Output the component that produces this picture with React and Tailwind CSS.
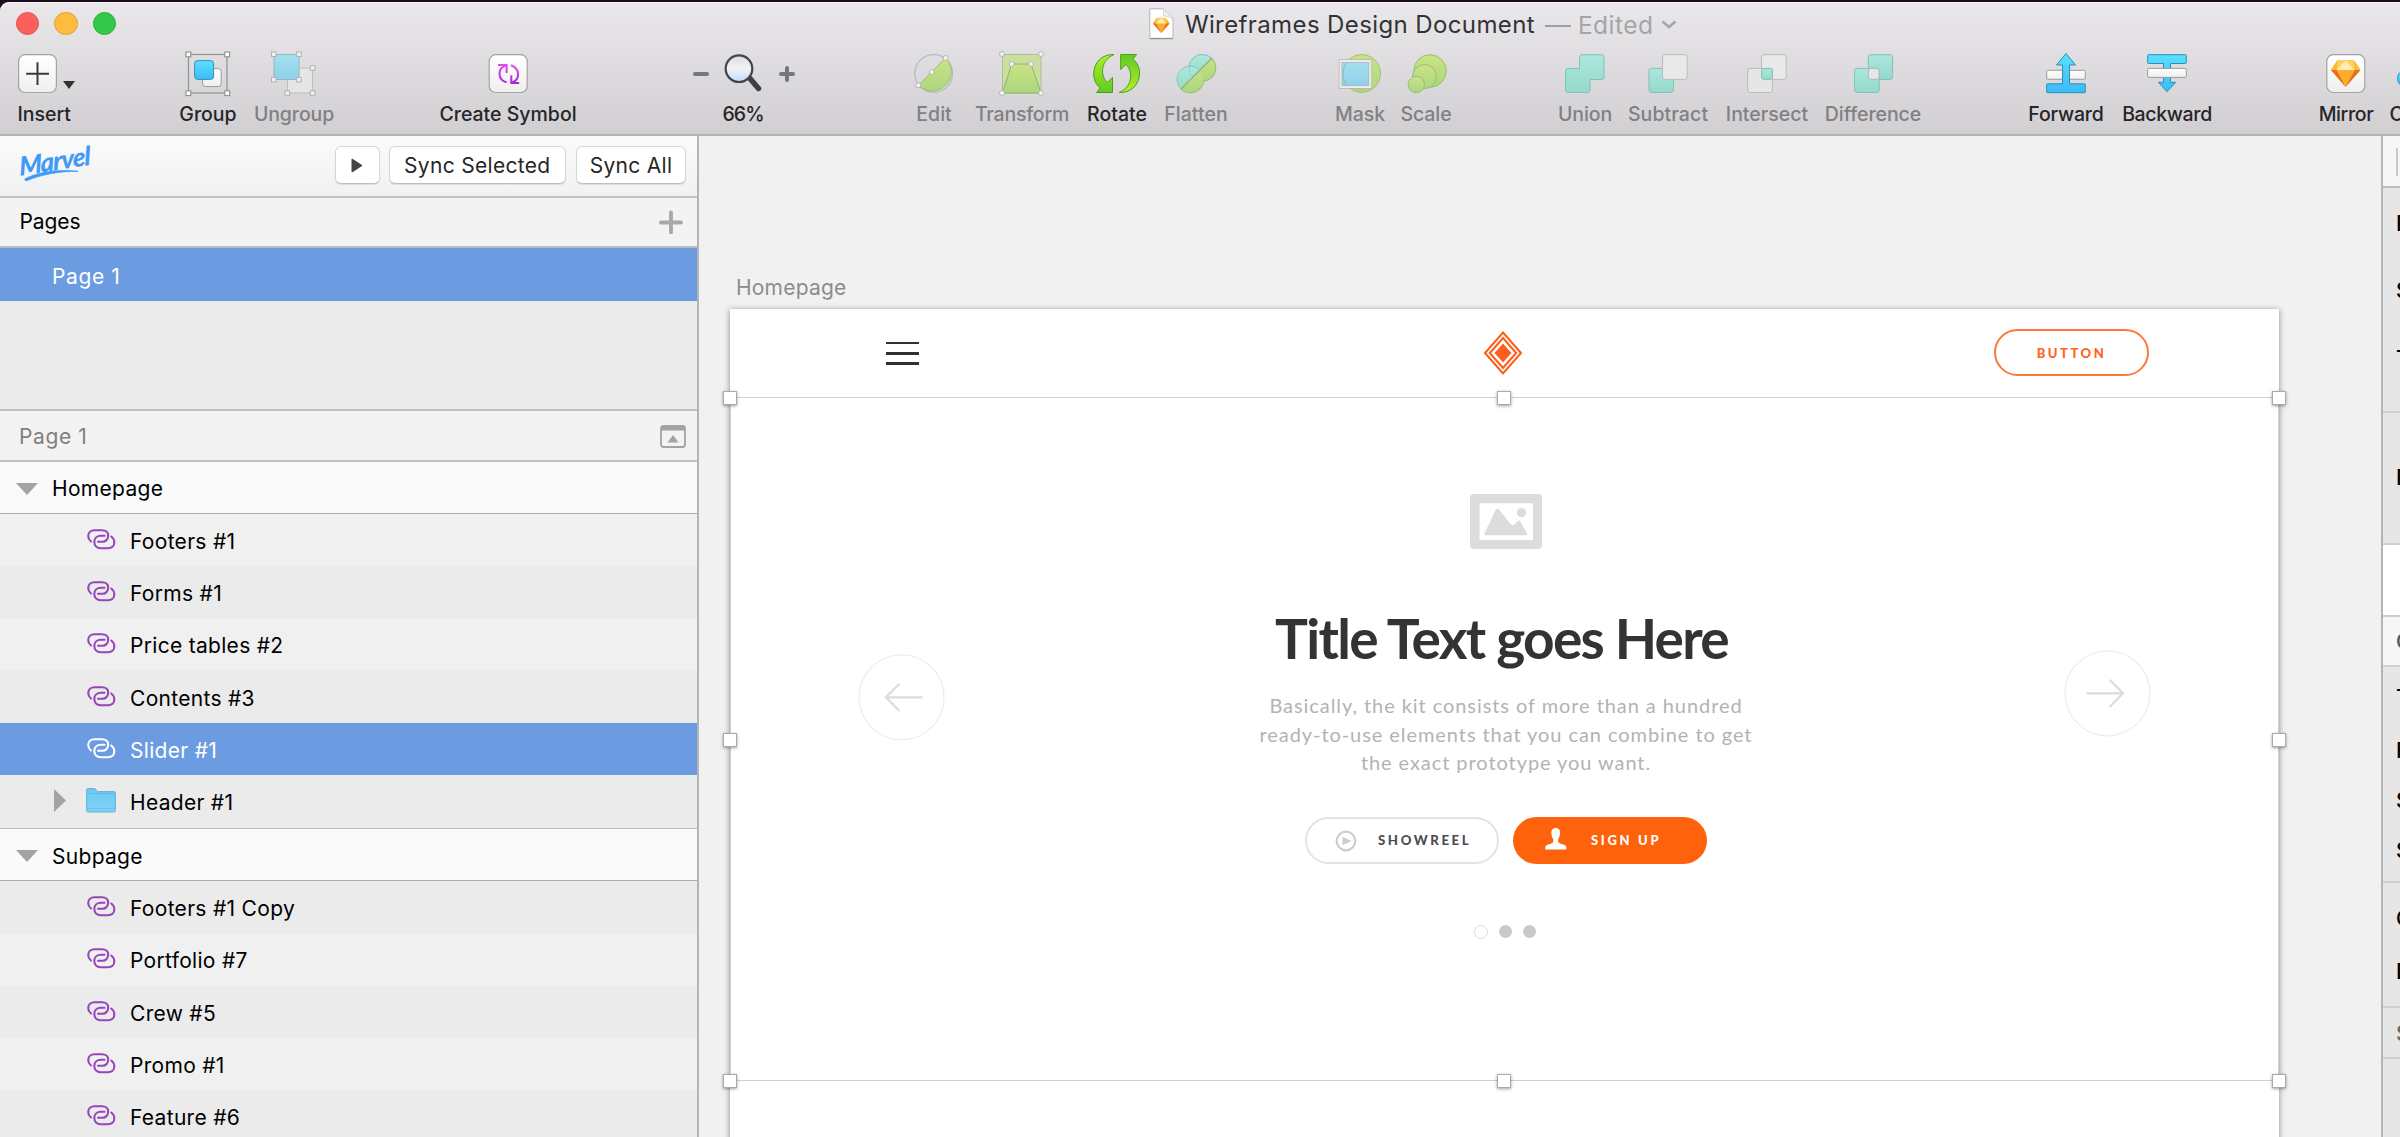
import React from "react";

function Icon({ children, className = "" }) {
  return (
    <svg width="48" height="48" viewBox="0 0 48 48" fill="none" className={"shrink-0 " + className}>
      {children}
    </svg>
  );
}

function Gradients() {
  return (
    <svg width="0" height="0" className="absolute" aria-hidden="true">
      <defs>
        <linearGradient id="blue" x1="0" y1="0" x2="0" y2="1"><stop offset="0" stopColor="#5be0fe" /><stop offset="1" stopColor="#3cbaf8" /></linearGradient>
        <linearGradient id="green" x1="0" y1="0" x2="0" y2="1"><stop offset="0" stopColor="#b0ee2c" /><stop offset="1" stopColor="#62cb22" /></linearGradient>
        <linearGradient id="paleGreen" x1="0" y1="0" x2="0" y2="1"><stop offset="0" stopColor="#cbe385" /><stop offset="1" stopColor="#aad77f" /></linearGradient>
        <linearGradient id="teal" x1="0" y1="0" x2="0" y2="1"><stop offset="0" stopColor="#abe8dd" /><stop offset="1" stopColor="#95d9cb" /></linearGradient>
        <linearGradient id="white" x1="0" y1="0" x2="0" y2="1"><stop offset="0" stopColor="#ffffff" /><stop offset="1" stopColor="#efefef" /></linearGradient>
        <linearGradient id="lens" x1="0" y1="0" x2="0" y2="1"><stop offset="0" stopColor="#dedde0" /><stop offset="0.5" stopColor="#f2f3f5" /><stop offset="1" stopColor="#bfdcfb" /></linearGradient>
        <linearGradient id="purple" gradientUnits="userSpaceOnUse" x1="0" y1="14" x2="0" y2="34"><stop offset="0" stopColor="#e24df0" /><stop offset="1" stopColor="#a822d8" /></linearGradient>
        <linearGradient id="paleBlue" x1="0" y1="0" x2="0" y2="1"><stop offset="0" stopColor="#a5e0ee" /><stop offset="1" stopColor="#8fd0ea" /></linearGradient>
        <linearGradient id="folder" x1="0" y1="0" x2="0" y2="1"><stop offset="0" stopColor="#6dc9f5" /><stop offset="1" stopColor="#7fd2f8" /></linearGradient>
      </defs>
    </svg>
  );
}

const Sq = ({ x, y, stroke = "#8d8d8d" }) => <rect x={x - 2.4} y={y - 2.4} width="4.8" height="4.8" fill="#fff" stroke={stroke} strokeWidth="1.1" />;
const Dot = ({ x, y }) => <circle cx={x} cy={y} r="2.5" fill="#f4f4f4" stroke="#b5b5b5" strokeWidth="1" />;

const GroupIcon = () => (
  <Icon>
    <rect x="4.5" y="4.5" width="38.5" height="38.5" stroke="#909092" strokeWidth="1.2" />
    <Sq x={4.4} y={4.4} /><Sq x={43.2} y={4.4} /><Sq x={4.4} y={43.2} /><Sq x={43.2} y={43.2} />
    <rect x="18.6" y="18.6" width="18.6" height="18" rx="3" fill="url(#white)" stroke="#9a9a9a" />
    <rect x="10.6" y="10.6" width="19" height="18.8" rx="3" fill="url(#blue)" stroke="#2f93bd" />
  </Icon>
);

const UngroupIcon = () => (
  <Icon>
    <rect x="17.5" y="18" width="25" height="25" fill="#e6e6e7" stroke="#bdbdbf" />
    <rect x="4" y="4.5" width="25" height="25" fill="url(#paleBlue)" stroke="#8fb9c6" />
    {[[3.8, 4.2], [29, 4.2], [3.8, 29.6], [29, 29.6], [42.6, 18], [17.3, 43], [42.6, 43]].map(([x, y]) => (
      <rect key={x + "-" + y} x={x - 2.3} y={y - 2.3} width="4.6" height="4.6" fill="#efefef" stroke="#b2b2b4" />
    ))}
  </Icon>
);

const SymbolIcon = () => (
  <Icon>
    <rect x="5.2" y="4.7" width="38" height="37.8" rx="6.5" fill="url(#white)" stroke="#a3a3a5" strokeWidth="1.2" />
    <g stroke="url(#purple)" strokeWidth="2">
      <path d="M14 15H22.6V23" />
      <path d="M22 15.4C13.5 18 13 29.5 22.6 32.4" />
      <path d="M35.2 32.9H27.3V25.3" />
      <path d="M27 15.2C36 18.500 36.500 29.500 28 32.4" />
    </g>
  </Icon>
);

const ZoomIcon = () => (
  <div className="flex w-[102px] shrink-0 translate-x-px items-center justify-between">
    <div className="h-[4px] w-[16px] rounded-full bg-[#77767a]" />
    <Icon>
      <path d="M30 28.500L38.500 38.500" stroke="#3f3f41" strokeWidth="5.500" strokeLinecap="round" />
      <circle cx="19" cy="18.700" r="13.300" fill="url(#lens)" stroke="#454547" strokeWidth="2.200" />
    </Icon>
    <svg width="16" height="16" viewBox="0 0 16 16"><path d="M2 8H14M8 2V14" stroke="#77767a" strokeWidth="4" strokeLinecap="round" /></svg>
  </div>
);

const EditIcon = () => (
  <Icon>
    <circle cx="23.700" cy="23.500" r="18.900" stroke="#b9b8ba" strokeWidth="1.200" />
    <path d="M8.300 35.300L35.700 8A18.900 18.900 0 0 1 8.300 35.300Z" fill="url(#paleGreen)" stroke="#9bbd78" />
    <Dot x={8.3} y={35.3} /><Dot x={21.7} y={22} /><Dot x={35.7} y={8} />
  </Icon>
);

const TransformIcon = () => (
  <Icon>
    <rect x="4.500" y="4.500" width="38.500" height="38.500" fill="#c9dfa0" stroke="#aebf90" />
    <path d="M4.500 43L13.700 14H33L43 43Z" fill="url(#paleGreen)" stroke="#94ae78" />
    <Dot x={4} y={4} /><Dot x={43} y={4} /><Dot x={4} y={43} /><Dot x={43} y={43} /><Dot x={13.7} y={14} /><Dot x={33} y={14} />
  </Icon>
);

const ROTATE = "M21 4.500C8.500 4 .700 13 .700 24C.700 30 3 34.500 7.300 38L3.500 42.500H19.500V27.300L14.800 32.200C8.500 29.500 5 11.500 21 4.500Z";
const RotateIcon = () => (
  <Icon>
    <path d={ROTATE} fill="url(#green)" stroke="#4f9e1c" />
    <g transform="rotate(180 23.600 23.500)">
      <path d={ROTATE} fill="url(#green)" stroke="#4f9e1c" />
    </g>
  </Icon>
);

const FlattenIcon = () => (
  <Icon>
    <clipPath id="cutUpper"><path d="M0 48L48 0H0Z" /></clipPath>
    <clipPath id="cutLower"><path d="M0 48L48 0V48Z" /></clipPath>
    <g clipPath="url(#cutUpper)" fill="url(#teal)" stroke="#8cc5ba">
      <circle cx="30.300" cy="17.800" r="13.400" /><circle cx="18.300" cy="29.400" r="13.400" />
      <circle cx="30.300" cy="17.800" r="13.400" fill="none" strokeOpacity="0.5" />
    </g>
    <g clipPath="url(#cutLower)">
      <g stroke="#9bbd78" strokeWidth="2"><circle cx="30.300" cy="17.800" r="13" /><circle cx="18.300" cy="29.400" r="13" /></g>
      <g fill="url(#paleGreen)"><circle cx="30.300" cy="17.800" r="12.900" /><circle cx="18.300" cy="29.400" r="12.900" /></g>
    </g>
    <path d="M9.200 38.800L39.800 8.200" stroke="#93a873" strokeWidth="1.200" />
  </Icon>
);

const MaskIcon = () => (
  <Icon>
    <circle cx="25.700" cy="23.500" r="18.900" fill="url(#paleGreen)" stroke="#a5bf80" />
    <rect x="4.500" y="11" width="29.800" height="26" fill="url(#paleBlue)" stroke="#b5b5b7" strokeWidth="3.600" />
    <rect x="4.500" y="11" width="29.800" height="26" stroke="#ececec" strokeWidth="2" />
    <path d="M10.500 12.500A18.900 18.900 0 0 0 10.500 35" stroke="#85b8c4" />
  </Icon>
);

const ScaleIcon = () => (
  <Icon className="translate-x-px">
    <g fill="url(#paleGreen)" stroke="#9dba78">
      <circle cx="27" cy="21" r="16.300" /><circle cx="21.500" cy="26.600" r="12" /><circle cx="13.300" cy="34.500" r="8.200" />
    </g>
  </Icon>
);

const boolStroke = "#86bfb3";
const UnionIcon = () => (
  <Icon><path d="M21 4.700H40.500a2.500 2.500 0 0 1 2.500 2.500V27a2.500 2.500 0 0 1-2.500 2.500H29V40a2.500 2.500 0 0 1-2.500 2.500H7a2.500 2.500 0 0 1-2.500-2.500V20.900a2.500 2.500 0 0 1 2.500-2.500H18.500V7.200a2.500 2.500 0 0 1 2.500-2.500Z" fill="url(#teal)" stroke={boolStroke} /></Icon>
);
const SubtractIcon = () => (
  <Icon>
    <rect x="5" y="18.400" width="24.500" height="24.100" rx="2.500" fill="url(#teal)" stroke={boolStroke} />
    <rect x="18.500" y="4.700" width="24.700" height="24.700" rx="2.500" fill="#e9e9ea" stroke="#bbbbbd" />
  </Icon>
);
const IntersectIcon = () => (
  <Icon>
    <rect x="18.500" y="4.700" width="24.700" height="24.700" rx="2.500" fill="#e9e9ea" stroke="#bbbbbd" />
    <rect x="4.700" y="18.400" width="24.700" height="24.100" rx="2.500" fill="#e6e6e7" stroke="#bbbbbd" />
    <rect x="18.500" y="18.400" width="10.900" height="11" rx="2.500" fill="url(#teal)" stroke={boolStroke} />
  </Icon>
);
const DifferenceIcon = () => (
  <Icon>
    <rect x="19.300" y="4.700" width="24.300" height="24.700" rx="2.500" fill="url(#teal)" stroke={boolStroke} />
    <rect x="5.500" y="18.400" width="24.700" height="24.100" rx="2.500" fill="url(#teal)" stroke={boolStroke} />
    <rect x="19.300" y="18.400" width="10.900" height="11" rx="2.500" fill="#e6e6e7" stroke="#a9b9b6" />
  </Icon>
);

const ForwardIcon = () => (
  <Icon>
    <rect x="4.700" y="20.300" width="38.600" height="9" rx="1" fill="url(#white)" stroke="#9b9b9d" />
    <path d="M24 3.500L33.500 15H27.500V33.800H42.500a.8 .8 0 0 1 .8 .8V41.900a.8 .8 0 0 1-.8 .8H5.500a.8 .8 0 0 1-.8-.8V34.600a.8 .8 0 0 1 .8-.8H20.500V15H14.500Z" fill="url(#blue)" stroke="#2c8fb8" />
  </Icon>
);
const BackwardIcon = () => (
  <Icon>
    <path d="M5.500 4.700H42.500a.8 .8 0 0 1 .8 .8V12.700a.8 .8 0 0 1-.8 .8H27.500V32.300H32.700L24 41.700L15.300 32.300H20.500V13.500H5.500a.8 .8 0 0 1-.8-.8V5.500a.8 .8 0 0 1 .8-.8Z" fill="url(#blue)" stroke="#2c8fb8" />
    <rect x="4.700" y="18.400" width="38.600" height="9" rx="1" fill="url(#white)" stroke="#9b9b9d" />
  </Icon>
);

function Gem() {
  return (
    <>
      <path d="M15.300 10.500L23.600 10L32 10.500L38.400 20L23.600 37L9 20Z" fill="#fdad2d" />
      <path d="M15.300 10.500L14.500 20H9Z" fill="#fdb82e" />
      <path d="M32 10.500L32.800 20H38.400Z" fill="#fdb82e" />
      <path d="M15.300 10.500L23.600 10L14.500 20Z M32 10.500L23.600 10L32.800 20Z" fill="#fed154" />
      <path d="M23.600 10L32.800 20H14.500Z" fill="#feebb5" />
      <path d="M9 20H14.500L23.600 37Z M38.400 20H32.800L23.600 37Z" fill="#ea6c21" />
    </>
  );
}
const MirrorIcon = () => (
  <Icon><rect x="4.800" y="4.700" width="38" height="37.800" rx="6.500" fill="url(#white)" stroke="#a3a3a5" strokeWidth="1.200" /><Gem /></Icon>
);
const CloudIcon = () => (
  <Icon className="translate-x-px"><circle cx="12" cy="28.500" r="8.500" fill="url(#blue)" stroke="#2c8fb8" /></Icon>
);

const TOOLS = [
  { label: "Group", icon: GroupIcon, box: "ml-[104px] w-[56px]", on: true },
  { label: "Ungroup", icon: UngroupIcon, box: "ml-[18px] w-[80px] tracking-[-0.12px]" },
  { label: "Create Symbol", icon: SymbolIcon, box: "ml-[106px] w-[136px]", on: true },
  { label: "66%", icon: ZoomIcon, box: "ml-[116px] w-[102px] tracking-[-0.9px]", on: true },
  { label: "Edit", icon: EditIcon, box: "ml-[122px] w-[36px]" },
  { label: "Transform", icon: TransformIcon, box: "ml-[23px] w-[94px] tracking-[-0.22px]" },
  { label: "Rotate", icon: RotateIcon, box: "ml-[18px] w-[60px]", on: true },
  { label: "Flatten", icon: FlattenIcon, box: "ml-[18px] w-[62px] tracking-[0.08px]" },
  { label: "Mask", icon: MaskIcon, box: "ml-[109px] w-[48px] tracking-[-0.1px]" },
  { label: "Scale", icon: ScaleIcon, box: "ml-[17px] w-[50px] tracking-[-0.1px]" },
  { label: "Union", icon: UnionIcon, box: "ml-[107px] w-[54px] tracking-[-0.1px]" },
  { label: "Subtract", icon: SubtractIcon, box: "ml-[16px] w-[80px] tracking-[0.1px]" },
  { label: "Intersect", icon: IntersectIcon, box: "ml-[18px] w-[82px]" },
  { label: "Difference", icon: DifferenceIcon, box: "ml-[17px] w-[96px] tracking-[-0.06px]" },
  { label: "Forward", icon: ForwardIcon, box: "ml-[108px] w-[74px] tracking-[-0.2px]", on: true },
  { label: "Backward", icon: BackwardIcon, box: "ml-[20px] w-[88px] tracking-[-0.35px]", on: true },
  { label: "Mirror", icon: MirrorIcon, box: "ml-[107px] w-[56px] tracking-[-0.39px]", on: true },
  { label: "Cloud", icon: CloudIcon, box: "ml-[16px] w-[54px]", on: true },
];

function Tool({ label, icon: Glyph, box, on }) {
  return (
    <div className={"flex shrink-0 flex-col items-center " + box}>
      <Glyph />
      <span className={"mt-[3.500px] whitespace-nowrap leading-6 " + (on ? "text-[#262527]" : "text-[#818083]")}>{label}</span>
    </div>
  );
}

function Toolbar() {
  return (
    <header className="flex h-[134px] shrink-0 flex-col rounded-tl-[9px] border-b-2 border-[#b2b1b3] bg-linear-to-b from-[#eae8eb] to-[#d1cfd2] shadow-[inset_0_1px_0_#f6f5f6]">
      <div className="flex h-[48px] items-start">
        <div className="mt-[9.500px] ml-[15.500px] flex gap-[15.200px]">
          <div className="size-[23.500px] rounded-full border border-[#e2514d] bg-[#fc605c]" />
          <div className="size-[23.500px] rounded-full border border-[#e0a135] bg-[#fdbc40]" />
          <div className="size-[23.500px] rounded-full border border-[#2bab3c] bg-[#34c84a]" />
        </div>
        <svg width="25" height="32" viewBox="0 0 25 32" className="mt-[5.500px] ml-[1033px]">
          <path d="M.8 .8H14.500L24 10.500V30.300H.8Z" fill="#fff" stroke="#b5b5b7" />
          <path d="M14.500 .8V7.500L24 10.500Z" fill="#f1f1f1" stroke="#d0d0d0" strokeWidth="0.800" />
          <path d="M.8 30.600H24" stroke="#909092" strokeWidth="1.200" />
          <g transform="translate(-1 4.200) scale(0.560)"><Gem /></g>
        </svg>
        <span className="mt-[6.500px] ml-[10.500px] w-[356px] whitespace-nowrap text-[24px] leading-8 tracking-[0.390px] text-[#333235]">Wireframes Design Document</span>
        <div className="mt-[22.500px] ml-[4px] h-[2px] w-[26px] bg-[#9d9c9f]" />
        <span className="mt-[6.500px] ml-[7px] w-[76px] whitespace-nowrap text-[24.500px] leading-8 tracking-[0.500px] text-[#a5a4a7]">Edited</span>
        <svg width="16" height="10" viewBox="0 0 16 10" fill="none" className="mt-[17.500px] ml-[7.500px]"><path d="M1.500 1.500L8 7L14.500 1.500" stroke="#a5a4a7" strokeWidth="2.600" /></svg>
      </div>
      <div className="flex text-[19.500px] font-medium">
        <div className="ml-[17.500px] flex w-[58.500px] shrink-0 flex-col">
          <div className="flex h-12 items-start">
            <svg width="40" height="48" viewBox="0 0 40 48" className="shrink-0">
              <rect x="0.600" y="4.700" width="37.800" height="37.800" rx="6.500" fill="url(#white)" stroke="#a3a3a5" strokeWidth="1.200" />
              <path d="M8.200 23.700H31M19.500 12.300V35" stroke="#3a3a3c" strokeWidth="2" />
            </svg>
            <svg width="12" height="8" viewBox="0 0 12 8" className="mt-[31px] ml-[5px] shrink-0"><path d="M0 0H12L6 8Z" fill="#333" /></svg>
          </div>
          <span className="mt-[3.500px] leading-6 text-[#262527]">Insert</span>
        </div>
        {TOOLS.map((t) => <Tool key={t.label} {...t} />)}
      </div>
    </header>
  );
}

function LinkIcon({ color }) {
  return (
    <svg width="29" height="21" viewBox="0 0 29 21" fill="none" className="shrink-0">
      <g stroke={color} strokeWidth="2.100" strokeLinecap="round">
        <path d="M4 12.500C2.200 11 1.200 9.200 1.200 7C1.200 3.500 4 1.200 7.500 1.200H15C18.500 1.200 21.200 3.300 21.200 6.500C21.200 10 18.800 12.800 15.500 12.800H11" />
        <path d="M17.500 6.800H14C10 6.800 7.300 9.300 7.300 12.800C7.300 16.800 10 19.200 13.500 19.200H21C24.800 19.200 27.300 17 27.300 13.500C27.300 11 26.300 9 24.300 7.500" />
      </g>
    </svg>
  );
}

const FolderIcon = () => (
  <svg width="30" height="25" viewBox="0 0 30 25" className="shrink-0">
    <path d="M.6 2A1.500 1.500 0 0 1 2 .600H9L11.500 3.600H28A1.500 1.500 0 0 1 29.400 5V22.500A1.500 1.500 0 0 1 28 24H2A1.500 1.500 0 0 1 .6 22.500Z" fill="url(#folder)" stroke="#58aedb" strokeWidth="0.900" />
    <path d="M1 5.500H29" stroke="#5cb9e8" strokeWidth="0.900" />
    <path d="M1 20.500H29" stroke="#63bde9" strokeWidth="0.700" />
  </svg>
);

function Layer({ name, tone, selected, folder }) {
  return (
    <div className={"flex h-[52.300px] shrink-0 items-center pt-[3px] " + (selected ? "bg-[#6b9ce1] text-white" : tone === "light" ? "bg-[#f0f0f0]" : "bg-[#ebebeb]")}>
      <div className="-mt-[5px] flex w-[131px] shrink-0 items-center">
        {folder ? (
          <>
            <svg width="12" height="23" viewBox="0 0 12 23" className="ml-[54px] shrink-0"><path d="M0 0L12 11.500L0 23Z" fill="#a3a3a3" /></svg>
            <div className="ml-5"><FolderIcon /></div>
          </>
        ) : (
          <div className="ml-[86.500px]"><LinkIcon color={selected ? "#ffffff" : "#9745bb"} /></div>
        )}
      </div>
      <span className="-ml-px">{name}</span>
    </div>
  );
}

function Artboard({ name }) {
  return (
    <div className="flex h-[52px] shrink-0 items-center border-b border-[#adadad] bg-[#fafafa] pt-[3px]">
      <svg width="22" height="12" viewBox="0 0 22 12" className="ml-[16px]"><path d="M0 0H22L11 12Z" fill="#a3a3a3" /></svg>
      <span className="ml-[14px]">{name}</span>
    </div>
  );
}

const SyncButton = ({ className, children }) => (
  <button className={"flex h-[38.500px] items-center justify-center whitespace-nowrap rounded-[6px] border border-[#d6d6d6] border-b-[#bebebe] bg-white pt-px text-[#262626] shadow-[0_1px_1px_#00000018] " + className}>{children}</button>
);

function Sidebar() {
  return (
    <aside className="flex w-[699px] shrink-0 flex-col overflow-hidden border-r-2 border-[#b5b5b5] bg-[#ebebeb] text-[21px] tracking-[0.300px] text-black">
      <div className="flex h-[62px] shrink-0 items-start border-b-2 border-[#c3c3c3] bg-linear-to-b from-[#fbfbfb] to-[#f1f1f1] pt-[9.500px]">
        <div className="relative ml-[18px] h-[40px] w-[80px] shrink-0 text-[#3f9af8]">
          <div className="origin-bottom-left translate-x-[2px] translate-y-[4px] -rotate-[9deg] -skew-x-6 font-['Lato'] text-[26px] leading-8 font-black italic tracking-[-1px]">Marvel</div>
          <svg width="60" height="14" viewBox="0 0 60 14" className="absolute top-[22px] left-[6px]"><path d="M1.500 10.500C15 4 34 1 54 3.300C36 3 18 6.500 3 12.500C1 13.200 0 11.500 1.500 10.500Z" fill="currentColor" stroke="currentColor" strokeWidth="0.800" /></svg>
        </div>
        <SyncButton className="ml-[237px] w-[44.500px]">
          <svg width="12" height="15" viewBox="0 0 12 15"><path d="M1 1L11 7.500L1 14Z" fill="#444" stroke="#444" strokeWidth="1" strokeLinejoin="round" /></svg>
        </SyncButton>
        <SyncButton className="ml-[9.500px] w-[176.500px]">Sync Selected</SyncButton>
        <SyncButton className="ml-[10.500px] w-[110px]">Sync All</SyncButton>
      </div>
      <div className="flex h-[50px] shrink-0 items-center justify-between border-b-2 border-[#bdbdbd] bg-[#f3f3f3] pr-[14px] pl-[19.500px] tracking-[-0.100px]">
        <span>Pages</span>
        <svg width="24" height="24" viewBox="0 0 24 24" className="-mt-px"><path d="M2 12.500H22M12 2.500V22.500" stroke="#a8a8a8" strokeWidth="3.800" strokeLinecap="round" /></svg>
      </div>
      <div className="flex h-[53px] shrink-0 items-center bg-[#6b9ce1] pt-[4px] pl-[52px] tracking-[0.600px] text-white">Page 1</div>
      <div className="h-[108px] shrink-0" />
      <div className="flex h-[53px] shrink-0 items-center justify-between border-y-2 border-[#bfbfbf] bg-[#f3f3f3] pt-[2px] pr-[11px] pl-[19px] tracking-[0.600px] text-[#808080]">
        <span>Page 1</span>
        <svg width="26" height="23" viewBox="0 0 26 23" fill="none">
          <rect x="1" y="1" width="24" height="21" rx="2.500" stroke="#a3a3a3" strokeWidth="1.800" />
          <path d="M1 1H25V5.500H1Z" fill="#a3a3a3" /><path d="M7.500 17.500H18.500L13 10Z" fill="#a3a3a3" />
        </svg>
      </div>
      <Artboard name="Homepage" />
      <Layer name="Footers #1" tone="light" />
      <Layer name="Forms #1" />
      <Layer name="Price tables #2" tone="light" />
      <Layer name="Contents #3" />
      <Layer name="Slider #1" selected />
      <Layer name="Header #1" folder />
      <div className="h-[1.500px] shrink-0 bg-[#bdbdbd]" />
      <Artboard name="Subpage" />
      <Layer name="Footers #1 Copy" />
      <Layer name="Portfolio #7" tone="light" />
      <Layer name="Crew #5" />
      <Layer name="Promo #1" tone="light" />
      <Layer name="Feature #6" />
    </aside>
  );
}

const HANDLES = [
  "-top-[7px] -left-[8px]", "-top-[7px] left-[766px]", "-top-[7px] -right-[8px]",
  "top-[334.500px] -left-[8px]", "top-[334.500px] -right-[8px]",
  "top-[676px] -left-[8px]", "top-[676px] left-[766px]", "top-[676px] -right-[8px]",
];

const ArrowCircle = ({ flip, className }) => (
  <svg width="87" height="87" viewBox="0 0 87 87" fill="none" className={"shrink-0 " + className}>
    <circle cx="43.500" cy="43.300" r="42.500" stroke="#eeeeee" strokeWidth="1.300" />
    <g transform={flip ? "translate(87 0) scale(-1 1)" : undefined} stroke="#dcdcdc" strokeWidth="2.200">
      <path d="M27.500 43.300H64.500M41.500 29.700L27.800 43.300L41.500 57" />
    </g>
  </svg>
);

function Slide() {
  return (
    <section className="relative flex h-[683px] shrink-0 items-start justify-between pr-[127.500px] pl-[128px]">
      <ArrowCircle className="mt-[255.500px]" />
      <div className="ml-[3px] flex flex-col items-center">
        <svg width="72" height="56" viewBox="0 0 72 56" className="mt-[95.500px]">
          <path fillRule="evenodd" d="M4 0H68A4 4 0 0 1 72 4V51A4 4 0 0 1 68 55H4A4 4 0 0 1 0 51V4A4 4 0 0 1 4 0ZM9.500 9.300V46H63V9.300Z" fill="#dcdcdc" />
          <path d="M15.500 41.200C14.400 41.200 14 40.700 14.500 39.600L25.700 15.800C26.500 14.300 28 14.300 29 15.500L40.500 30C42 31.800 43.300 31.600 44.500 30.300L47.500 27.200C48.500 26.200 49.700 26.300 50.500 27.700L57.200 39.800C57.700 40.800 57.300 41.200 56.300 41.200Z" fill="#dcdcdc" />
          <circle cx="51.500" cy="18.600" r="4.600" fill="#dcdcdc" />
        </svg>
        <h1 className="mt-[55px] -ml-[9px] whitespace-nowrap text-[55px] leading-[66px] font-bold tracking-[-1.700px] text-[#333333]">Title Text goes Here</h1>
        <p className="mt-[20.500px] whitespace-nowrap text-center text-[20px] leading-[28.600px] tracking-[0.930px] text-[#b3b3b3]">
          Basically, the kit consists of more than a hundred<br />ready-to-use elements that you can combine to get<br />the exact prototype you want.
        </p>
        <div className="mt-[40.500px] flex gap-[14px]">
          <button className="flex h-[46.500px] w-[194px] items-center rounded-full border-[2px] border-[#e3e3e3] pl-[28px] text-[13.200px] font-black tracking-[2.600px] text-[#4d4e51]">
            <svg width="22" height="22" viewBox="0 0 22 22" fill="none" className="shrink-0"><circle cx="11" cy="11" r="9.300" stroke="#cccccc" strokeWidth="2.200" /><path d="M7.500 6.800L16.500 11L7.500 15.200Z" fill="#cccccc" /></svg>
            <span className="mt-px ml-[21px]">SHOWREEL</span>
          </button>
          <button className="flex h-[46.500px] w-[194px] items-center rounded-full bg-[#ff620c] pl-[32px] text-[13px] font-black tracking-[2.690px] text-white">
            <svg width="22" height="22" viewBox="0 0 22 22" className="-mt-[3px] shrink-0"><path d="M10.700 0C13.800 0 15.200 2.300 15 5.500C14.900 8.500 13.800 10 13.200 11.200C12.900 13.800 13.300 14.800 16 15.700C19.500 16.900 21.300 17.500 21.300 19V21.500H.3V19C.3 17.500 2 16.900 5.500 15.700C8.200 14.800 8.600 13.800 8.300 11.200C7.600 10 6.500 8.500 6.400 5.500C6.200 2.300 7.600 0 10.700 0Z" fill="#fff" /></svg>
            <span className="ml-[24px] whitespace-nowrap">SIGN UP</span>
          </button>
        </div>
        <div className="mt-[61px] -ml-[2.500px] flex items-center gap-[11px]">
          <div className="size-[14px] rounded-full border-[1.500px] border-[#dddddd]" />
          <div className="size-[13.200px] rounded-full bg-[#c9c9c9]" />
          <div className="size-[13.200px] rounded-full bg-[#c9c9c9]" />
        </div>
      </div>
      <ArrowCircle flip className="mt-[252px]" />
      <div className="absolute -top-px right-0 bottom-0 left-0 border border-[#d0d0d0]">
        {HANDLES.map((h) => <div key={h} className={"absolute size-[14px] border border-[#aaaaaa] bg-white shadow-[0_1px_3px_#00000060] " + h} />)}
      </div>
    </section>
  );
}

function Canvas() {
  return (
    <main className="flex min-w-0 flex-1 flex-col overflow-hidden bg-[#f1f1f1] pl-[31px]">
      <div className="mt-[137.500px] ml-[6px] h-7 text-[21px] leading-7 tracking-[0.200px] text-[#8c8c8c]">Homepage</div>
      <div className="mt-[7px] flex h-[860px] w-[1548.500px] shrink-0 flex-col bg-white font-['Lato',sans-serif] shadow-[0_1px_6px_#00000070]">
        <div className="flex h-[89.500px] shrink-0 items-center">
          <div className="ml-[155.500px] flex w-[33px] flex-col gap-[7.500px]">
            <div className="h-[2.800px] bg-[#303030]" /><div className="h-[2.800px] bg-[#303030]" /><div className="h-[2.800px] bg-[#303030]" />
          </div>
          <svg width="42" height="46" viewBox="0 0 42 46" fill="none" className="ml-[563.500px]">
            <g stroke="#fb5f1b" strokeWidth="2.100"><path d="M21 2.500L39 23L21 43.500L3 23Z" /><path d="M21 8L34.200 23L21 38L7.800 23Z" /></g>
            <path d="M21 13.500L29.500 23L21 32.500L12.500 23Z" fill="#fb5f1b" />
          </svg>
          <button className="-mt-px ml-[470px] h-[47px] w-[155px] rounded-full border-2 border-[#ff7740] pt-px text-[13px] font-black tracking-[2.540px] text-[#ff6322]">BUTTON</button>
        </div>
        <Slide />
      </div>
    </main>
  );
}

const Letter = ({ className, children }) => <div className={"ml-[13px] h-6 shrink-0 text-[21px] leading-6 font-medium " + className}>{children}</div>;

function Inspector() {
  return (
    <aside className="flex w-[19px] shrink-0 flex-col overflow-hidden border-l-2 border-[#b5b5b5] bg-[#e6e6e6]">
      <div className="h-[52px] shrink-0 border-b-2 border-[#bdbdbd] bg-[#f6f6f6] pt-[12px] pl-[13px]"><div className="h-[28px] w-[2px] bg-[#c9c9c9]" /></div>
      <div className="flex h-[225px] shrink-0 flex-col border-b-2 border-[#d0d0d0]">
        <Letter className="mt-[24px]">P</Letter>
        <Letter className="mt-[43px]">S</Letter>
        <Letter className="mt-[44px]">T</Letter>
      </div>
      <div className="h-[132px] shrink-0 border-b-2 border-[#d0d0d0] pt-[53px]"><Letter>R</Letter></div>
      <div className="h-[72px] shrink-0 border-b-2 border-[#cdcdcd] bg-white" />
      <div className="h-[50px] shrink-0 border-b-2 border-[#d0d0d0] bg-[#f6f6f6] pt-[13px]"><Letter className="text-[#555]">O</Letter></div>
      <div className="flex h-[216px] shrink-0 flex-col border-b-2 border-[#d0d0d0]">
        <Letter className="mt-[19px]">T</Letter>
        <Letter className="mt-[29px]">P</Letter>
        <Letter className="mt-[26px]">S</Letter>
        <Letter className="mt-[26px]">S</Letter>
      </div>
      <div className="flex h-[125px] shrink-0 flex-col border-b-2 border-[#d0d0d0]">
        <Letter className="mt-[24px]">O</Letter>
        <Letter className="mt-[29px]">E</Letter>
      </div>
      <div className="h-[51px] shrink-0 border-b-2 border-[#d0d0d0] pt-[14px]"><Letter className="text-[#666]">S</Letter></div>
    </aside>
  );
}

export default function App() {
  return (
    <div className="flex h-[1137px] w-[2400px] flex-col overflow-hidden bg-[#1d0a1c] pt-[2px] font-['Inter',sans-serif] antialiased">
      <Gradients />
      <Toolbar />
      <div className="flex min-h-0 flex-1">
        <Sidebar />
        <Canvas />
        <Inspector />
      </div>
    </div>
  );
}
